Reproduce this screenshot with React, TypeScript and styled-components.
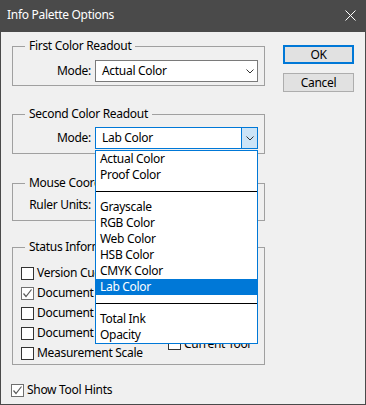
import styled, { createGlobalStyle } from "styled-components";

const GlobalStyle = createGlobalStyle`
  html, body {
    margin: 0;
    padding: 0;
    background: #f0f0f0;
  }
  body {
    font-family: "Noto Sans", "Open Sans", sans-serif;
    font-size: 12px;
    line-height: 16px;
    letter-spacing: -0.3px;
    color: #000;
  }
`;

const Window = styled.div`
  width: 366px;
  height: 405px;
  box-sizing: border-box;
  border: 1px solid #4a4a4a;
  border-top: 0;
  background: #f0f0f0;
  display: flex;
  flex-direction: column;
`;

const TitleBar = styled.div`
  height: 30px;
  margin: 0 -1px;
  background: #4a4a4a;
  color: #fff;
  display: flex;
  align-items: center;
  justify-content: space-between;
  padding: 0 10px 2px 7px;
`;

const Body = styled.div`
  flex: 1;
  display: flex;
  padding-left: 11px;
`;

const LeftColumn = styled.div`
  width: 253px;
  display: flex;
  flex-direction: column;
`;

const ButtonColumn = styled.div`
  display: flex;
  flex-direction: column;
  gap: 9px;
  margin-left: 18px;
  padding-top: 13px;
`;

const Button = styled.button<{ $default?: boolean }>`
  width: 71px;
  height: 19px;
  box-sizing: border-box;
  padding: 0;
  font: inherit;
  letter-spacing: inherit;
  color: #000;
  background: #e1e1e1;
  border: ${(p) => (p.$default ? "2px solid #0078d7" : "1px solid #adadad")};
  line-height: 14px;
`;

const Group = styled.fieldset<{ $top: number }>`
  margin: ${(p) => p.$top}px 0 0;
  padding: 0;
  min-inline-size: 0;
  width: 253px;
  box-sizing: border-box;
  border: 1px solid #a0a0a0;
`;

const Legend = styled.legend`
  margin-left: 12px;
  padding: 0 4px;
  line-height: 16px;
`;

const FieldRow = styled.div<{ $pt: number; $pb: number; $h?: number }>`
  display: flex;
  align-items: center;
  gap: 4px;
  height: ${(p) => p.$h ?? 22}px;
  padding: ${(p) => p.$pt}px 6px ${(p) => p.$pb}px 16px;
`;

const Label = styled.span`
  width: 62px;
  text-align: right;
  white-space: nowrap;
`;

const SelectWrap = styled.div`
  position: relative;
  flex: 1;
  height: 100%;
`;

const Select = styled.div<{ $open?: boolean }>`
  height: 100%;
  box-sizing: border-box;
  display: flex;
  background: #fff;
  border: 1px solid ${(p) => (p.$open ? "#0078d7" : "#7a7a7a")};
`;

const SelectText = styled.span`
  flex: 1;
  padding-left: 6px;
  display: flex;
  align-items: center;
`;

const Arrow = styled.span<{ $open?: boolean }>`
  width: 16px;
  box-sizing: border-box;
  display: flex;
  align-items: center;
  justify-content: center;
  border-left: 1px solid ${(p) => (p.$open ? "#0078d7" : "transparent")};
  background: ${(p) => (p.$open ? "#cce4f7" : "transparent")};
`;

const List = styled.div`
  position: absolute;
  top: calc(100% + 1px);
  left: 0;
  right: 0;
  z-index: 10;
  background: #fff;
  border: 1px solid #0078d7;
`;

const Option = styled.div<{ $selected?: boolean }>`
  height: 16px;
  padding-left: 4px;
  background: ${(p) => (p.$selected ? "#0078d7" : "transparent")};
  color: ${(p) => (p.$selected ? "#fff" : "#000")};
  white-space: nowrap;
`;

const Separator = styled.div`
  height: 16px;
  position: relative;
  &::after {
    content: "";
    position: absolute;
    left: 0;
    right: 0;
    top: 8px;
    height: 1px;
    background: #000;
  }
`;

const StatusGrid = styled.div`
  display: grid;
  grid-template-columns: 147px 1fr;
  padding: 8px 0 1px 8px;
`;

const CheckColumn = styled.div`
  display: flex;
  flex-direction: column;
`;

const CheckRow = styled.label<{ $h?: number }>`
  height: ${(p) => p.$h ?? 20}px;
  display: flex;
  align-items: center;
  gap: 3px;
  white-space: nowrap;
`;

const HintsRow = styled(CheckRow)`
  margin: 15px 0 0 -1px;
`;

const Box = styled.span<{ $checked?: boolean }>`
  width: 13px;
  height: 13px;
  box-sizing: border-box;
  flex: none;
  background: #fff;
  border: 1px solid ${(p) => (p.$checked ? "#707070" : "#333")};
  display: flex;
  align-items: center;
  justify-content: center;
`;

function Chevron() {
  return (
    <svg width="8" height="5" viewBox="0 0 8 5">
      <polyline points="0.5,0.5 4,4 7.5,0.5" fill="none" stroke="#333" strokeWidth="1" />
    </svg>
  );
}

function Tick() {
  return (
    <svg width="11" height="11" viewBox="0 0 11 11">
      <polyline points="1.5,5.5 4,8.5 9.5,1.5" fill="none" stroke="#5a5a5a" strokeWidth="1.2" />
    </svg>
  );
}

function Check({ checked, label, h }: { checked?: boolean; label: string; h?: number }) {
  return (
    <CheckRow $h={h}>
      <Box $checked={checked}>{checked && <Tick />}</Box>
      {label}
    </CheckRow>
  );
}

const modes = [
  "Actual Color",
  "Proof Color",
  "-",
  "Grayscale",
  "RGB Color",
  "Web Color",
  "HSB Color",
  "CMYK Color",
  "Lab Color",
  "-",
  "Total Ink",
  "Opacity",
];

export default function App() {
  return (
    <>
      <GlobalStyle />
      <Window>
        <TitleBar>
          <span>Info Palette Options</span>
          <svg width="11" height="11" viewBox="0 0 11 11">
            <path d="M0.5 0.5 L10.5 10.5 M10.5 0.5 L0.5 10.5" stroke="#fff" strokeWidth="1" />
          </svg>
        </TitleBar>
        <Body>
          <LeftColumn>
            <Group $top={6}>
              <Legend>First Color Readout</Legend>
              <FieldRow $pt={6} $pb={3}>
                <Label>Mode:</Label>
                <SelectWrap>
                  <Select>
                    <SelectText>Actual Color</SelectText>
                    <Arrow>
                      <Chevron />
                    </Arrow>
                  </Select>
                </SelectWrap>
              </FieldRow>
            </Group>

            <Group $top={20}>
              <Legend>Second Color Readout</Legend>
              <FieldRow $pt={5} $pb={4}>
                <Label>Mode:</Label>
                <SelectWrap>
                  <Select $open>
                    <SelectText>Lab Color</SelectText>
                    <Arrow $open>
                      <Chevron />
                    </Arrow>
                  </Select>
                  <List>
                    {modes.map((m, i) =>
                      m === "-" ? (
                        <Separator key={i} />
                      ) : (
                        <Option key={i} $selected={m === "Lab Color"}>
                          {m}
                        </Option>
                      )
                    )}
                  </List>
                </SelectWrap>
              </FieldRow>
            </Group>

            <Group $top={21}>
              <Legend>Mouse Coordinates</Legend>
              <FieldRow $pt={4} $pb={5} $h={20}>
                <Label>Ruler Units:</Label>
                <SelectWrap>
                  <Select>
                    <SelectText>Pixels</SelectText>
                    <Arrow>
                      <Chevron />
                    </Arrow>
                  </Select>
                </SelectWrap>
              </FieldRow>
            </Group>

            <Group $top={18}>
              <Legend>Status Information</Legend>
              <StatusGrid>
                <CheckColumn>
                  <Check label="Version Cue" />
                  <Check checked label="Document Sizes" />
                  <Check label="Document Profile" />
                  <Check label="Document Dimensions" />
                  <Check label="Measurement Scale" />
                </CheckColumn>
                <CheckColumn>
                  <Check h={23} label="Scratch Sizes" />
                  <Check h={23} label="Efficiency" />
                  <Check h={23} label="Timing" />
                  <Check h={23} label="Current Tool" />
                </CheckColumn>
              </StatusGrid>
            </Group>

            <HintsRow>
              <Box $checked>
                <Tick />
              </Box>
              Show Tool Hints
            </HintsRow>
          </LeftColumn>

          <ButtonColumn>
            <Button $default>OK</Button>
            <Button>Cancel</Button>
          </ButtonColumn>
        </Body>
      </Window>
    </>
  );
}
